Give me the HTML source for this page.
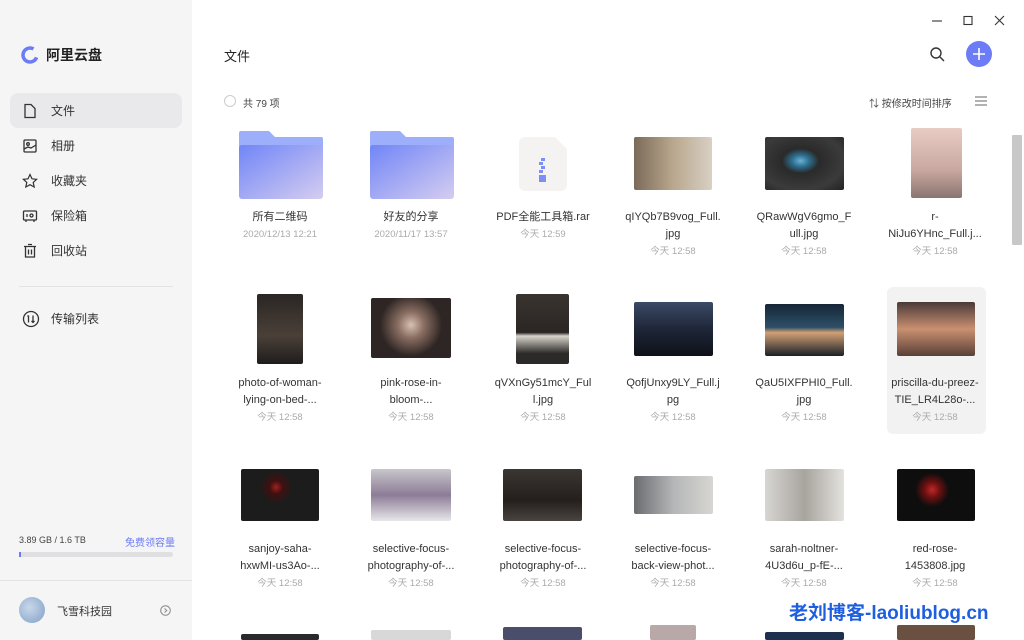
<!DOCTYPE html>
<html><head><meta charset="utf-8"><style>
*{margin:0;padding:0;box-sizing:border-box}
body{width:1024px;height:640px;overflow:hidden;font-family:"Liberation Sans","Noto Sans CJK SC",sans-serif;background:#fff;position:relative;color:#333}
.side{position:absolute;left:0;top:0;width:192px;height:640px;background:#f5f5f6}
.logo{position:absolute;left:20px;top:45px;display:flex;align-items:center;font-size:14px;font-weight:bold;color:#222}
.nav{position:absolute;left:10px;width:172px;height:35px;display:flex;align-items:center;font-size:12px;color:#333}
.nav svg{position:absolute;left:12px}
.nav span{position:absolute;left:41px}
.sel{background:#e9e9ec;border-radius:8px}
.abs{position:absolute}
.item{position:absolute;width:100px;text-align:center;font-size:11px;color:#333;line-height:17px}
.item .t{font-size:9.5px;color:#aaa;line-height:17px}
.th{position:absolute;border-radius:2px}
</style></head><body>
<div class="side">
 <div class="logo"><svg width="20" height="20" viewBox="0 0 20 20"><circle cx="10" cy="10" r="7" fill="none" stroke="#6b7cf6" stroke-width="3.5" stroke-dasharray="34 10" transform="rotate(20 10 10)"/></svg><span style="margin-left:6px">阿里云盘</span></div>
 <div class="nav sel" style="top:93px"><svg width="16" height="16" viewBox="0 0 16 16" fill="none" stroke="#333" stroke-width="1.3"><path d="M3 1.5h6l4 4v9H3z"/></svg><span>文件</span></div>
 <div class="nav" style="top:128px"><svg width="16" height="16" viewBox="0 0 16 16" fill="none" stroke="#333" stroke-width="1.3"><rect x="2" y="2" width="12" height="12" rx="1"/><circle cx="6" cy="6" r="1.3"/><path d="M2 11l4-2 3 1 5-3"/></svg><span>相册</span></div>
 <div class="nav" style="top:163px"><svg width="16" height="16" viewBox="0 0 16 16" fill="none" stroke="#333" stroke-width="1.2"><path d="M8 1.5l2 4.3 4.6.5-3.4 3.1 1 4.6L8 11.7 3.8 14l1-4.6L1.4 6.3l4.6-.5z"/></svg><span>收藏夹</span></div>
 <div class="nav" style="top:198px"><svg width="16" height="16" viewBox="0 0 16 16" fill="none" stroke="#333" stroke-width="1.3"><rect x="1.5" y="3" width="13" height="9" rx="1"/><circle cx="9.5" cy="7.5" r="1.5"/><path d="M5 6v3M4 12v2M12 12v2"/></svg><span>保险箱</span></div>
 <div class="nav" style="top:233px"><svg width="16" height="16" viewBox="0 0 16 16" fill="none" stroke="#333" stroke-width="1.3"><path d="M2 3.5h12M6 1.5h4M3.5 3.5v10.5h9V3.5M6.5 6.5v5M9.5 6.5v5"/></svg><span>回收站</span></div>
 <div class="abs" style="left:19px;top:286px;width:154px;height:1px;background:#e3e3e5"></div>
 <div class="nav" style="top:301px"><svg width="18" height="18" viewBox="0 0 18 18" fill="none" stroke="#333" stroke-width="1.3"><circle cx="9" cy="9" r="7.5"/><path d="M6.5 5.5v7M5.5 6.5l1-1M11 5.5v7M9.5 11l1.5 1.5 1.5-1.5"/></svg><span>传输列表</span></div>
 <div class="abs" style="left:19px;top:535px;font-size:9px;color:#444">3.89 GB / 1.6 TB</div>
 <div class="abs" style="left:125px;top:534px;font-size:10px;color:#6b7cf6">免费领容量</div>
 <div class="abs" style="left:19px;top:552px;width:154px;height:5px;border-radius:3px;background:#e0e0e2"><div style="width:2px;height:5px;background:#6b7cf6"></div></div>
 <div class="abs" style="left:0;top:580px;width:192px;height:1px;background:#e3e3e5"></div>
 <div class="abs" style="left:19px;top:597px;width:26px;height:26px;border-radius:50%;background:radial-gradient(circle at 40% 40%,#c9d8ea,#7f9fc5)"></div>
 <div class="abs" style="left:57px;top:603px;font-size:11px;color:#333">飞雪科技园</div>
 <svg class="abs" style="left:160px;top:605px" width="11" height="11" viewBox="0 0 11 11" fill="none" stroke="#888"><circle cx="5.5" cy="5.5" r="4.8"/><path d="M4.5 3.5l2.3 2-2.3 2"/></svg>
</div>
<svg class="abs" style="left:930px;top:14px" width="80" height="14" viewBox="0 0 80 14" fill="none" stroke="#333" stroke-width="1.1"><path d="M2 7h10"/><rect x="34" y="2.5" width="8" height="8"/><path d="M65 2l9 9M74 2l-9 9"/></svg>
<div class="abs" style="left:224px;top:46px;font-size:13px;color:#222">文件</div>
<svg class="abs" style="left:929px;top:46px" width="17" height="17" viewBox="0 0 17 17" fill="none" stroke="#333" stroke-width="1.4"><circle cx="7" cy="7" r="5"/><path d="M11 11l4 4"/></svg>
<div class="abs" style="left:966px;top:41px;width:26px;height:26px;border-radius:50%;background:#6b7cf6"></div>
<svg class="abs" style="left:966px;top:41px" width="26" height="26"><path d="M13 7v12M7 13h12" stroke="#fff" stroke-width="1.6"/></svg>
<div class="abs" style="left:224px;top:95px;width:12px;height:12px;border-radius:50%;border:1px solid #ccc"></div>
<div class="abs" style="left:243px;top:95px;font-size:10px;color:#444">共 79 项</div>
<div class="abs" style="left:869px;top:95px;font-size:10px;color:#444">⇅ 按修改时间排序</div>
<svg class="abs" style="left:975px;top:96px" width="12" height="10"><path d="M0 1h12M0 5h12M0 9h12" stroke="#666"/></svg>
<div class="abs" style="left:1012px;top:135px;width:10px;height:110px;background:#c8c8c8;border-radius:1px"></div>
<div class="abs" style="left:887px;top:287px;width:99px;height:147px;background:#f2f2f3;border-radius:6px"></div>
<svg class="abs" style="left:239px;top:131px" width="84" height="68" viewBox="0 0 84 68"><defs><linearGradient id="g" x1="0" y1="0" x2="1" y2="1"><stop offset="0" stop-color="#7085f7"/><stop offset="1" stop-color="#d5cdf0"/></linearGradient></defs><path d="M2 0h28l6 6h46a2 2 0 012 2v10H0V2a2 2 0 012-2z" fill="#9daefa"/><rect x="0" y="14" width="84" height="54" rx="3" fill="url(#g)"/></svg>
<svg class="abs" style="left:370px;top:131px" width="84" height="68" viewBox="0 0 84 68"><path d="M2 0h28l6 6h46a2 2 0 012 2v10H0V2a2 2 0 012-2z" fill="#9daefa"/><rect x="0" y="14" width="84" height="54" rx="3" fill="url(#g)"/></svg>
<svg class="abs" style="left:519px;top:137px" width="48" height="54" viewBox="0 0 48 54"><path d="M6 0h30l12 12v36a6 6 0 01-6 6H6a6 6 0 01-6-6V6a6 6 0 016-6z" fill="#f4f3f1"/><g fill="#7d8ff5"><rect x="22" y="21" width="4" height="3"/><rect x="20" y="25" width="4" height="3"/><rect x="22" y="29" width="4" height="3"/><rect x="20" y="33" width="4" height="3"/><rect x="20" y="38" width="7" height="7"/></g></svg>
<div class="th" style="left:634px;top:137px;width:78px;height:53px;background:linear-gradient(90deg,#7a6a58,#b9a78e 50%,#d8d0c4)"></div>
<div class="th" style="left:765px;top:137px;width:79px;height:53px;background:radial-gradient(ellipse at 45% 45%,#6fb0d6 0,#2c6f8f 14%,#2a2a2a 30%,#3b3b3b 70%,#222)"></div>
<div class="th" style="left:911px;top:128px;width:51px;height:70px;background:linear-gradient(180deg,#e8ccc4,#c9a8a0 60%,#8a7470)"></div>
<div class="th" style="left:257px;top:294px;width:46px;height:70px;background:linear-gradient(180deg,#2a2624,#4a4038 60%,#1e1c1b)"></div>
<div class="th" style="left:371px;top:298px;width:80px;height:60px;background:radial-gradient(circle at 50% 45%,#d8c0b4 0,#8a6e62 25%,#2e2624 60%)"></div>
<div class="th" style="left:516px;top:294px;width:53px;height:70px;background:linear-gradient(180deg,#3a3430,#2a2624 55%,#d8d4cc 60%,#2c2a28 85%)"></div>
<div class="th" style="left:634px;top:302px;width:79px;height:54px;background:linear-gradient(180deg,#3b4a66,#1e2638 50%,#0e1118)"></div>
<div class="th" style="left:765px;top:304px;width:79px;height:52px;background:linear-gradient(180deg,#152536,#2e5068 45%,#d2a074 55%,#1a2028)"></div>
<div class="th" style="left:897px;top:302px;width:78px;height:54px;background:linear-gradient(180deg,#4a3a38,#c99070 50%,#5a4038)"></div>
<div class="th" style="left:241px;top:469px;width:78px;height:52px;background:radial-gradient(circle at 45% 35%,#a02020 0,#401010 12%,#1c1c1c 30%)"></div>
<div class="th" style="left:371px;top:469px;width:80px;height:52px;background:linear-gradient(180deg,#c8c6cc,#8d7c96 50%,#e8e6ea)"></div>
<div class="th" style="left:503px;top:469px;width:79px;height:52px;background:linear-gradient(180deg,#3a3632,#241f1c 60%,#4a4440)"></div>
<div class="th" style="left:634px;top:476px;width:79px;height:38px;background:linear-gradient(90deg,#6a6c70,#b4b6b8 50%,#d8d6d2)"></div>
<div class="th" style="left:765px;top:469px;width:79px;height:52px;background:linear-gradient(90deg,#d8d6d2,#a8a49e 50%,#e4e2de)"></div>
<div class="th" style="left:897px;top:469px;width:78px;height:52px;background:radial-gradient(circle at 45% 40%,#c02828 0,#6a1010 15%,#0e0e0e 32%)"></div>
<div class="th" style="left:241px;top:634px;width:78px;height:6px;background:#2a2a2e"></div>
<div class="th" style="left:371px;top:630px;width:80px;height:10px;background:#d8d8d8"></div>
<div class="th" style="left:503px;top:627px;width:79px;height:13px;background:#4a4e6a"></div>
<div class="th" style="left:650px;top:625px;width:46px;height:15px;background:#b8a8a8"></div>
<div class="th" style="left:765px;top:632px;width:79px;height:8px;background:#1e3050"></div>
<div class="th" style="left:897px;top:625px;width:78px;height:15px;background:#6a5040"></div>
<div class="item" style="left:230px;top:209px">所有二维码<div class="t">2020/12/13 12:21</div></div>
<div class="item" style="left:361px;top:209px">好友的分享<div class="t">2020/11/17 13:57</div></div>
<div class="item" style="left:493px;top:209px">PDF全能工具箱.rar<div class="t">今天 12:59</div></div>
<div class="item" style="left:623px;top:209px">qIYQb7B9vog_Full.<br>jpg<div class="t">今天 12:58</div></div>
<div class="item" style="left:754px;top:209px">QRawWgV6gmo_F<br>ull.jpg<div class="t">今天 12:58</div></div>
<div class="item" style="left:885px;top:209px">r-<br>NiJu6YHnc_Full.j...<div class="t">今天 12:58</div></div>
<div class="item" style="left:230px;top:375px">photo-of-woman-<br>lying-on-bed-...<div class="t">今天 12:58</div></div>
<div class="item" style="left:361px;top:375px">pink-rose-in-<br>bloom-...<div class="t">今天 12:58</div></div>
<div class="item" style="left:493px;top:375px">qVXnGy51mcY_Ful<br>l.jpg<div class="t">今天 12:58</div></div>
<div class="item" style="left:623px;top:375px">QofjUnxy9LY_Full.j<br>pg<div class="t">今天 12:58</div></div>
<div class="item" style="left:754px;top:375px">QaU5IXFPHI0_Full.<br>jpg<div class="t">今天 12:58</div></div>
<div class="item" style="left:885px;top:375px">priscilla-du-preez-<br>TIE_LR4L28o-...<div class="t">今天 12:58</div></div>
<div class="item" style="left:230px;top:541px">sanjoy-saha-<br>hxwMI-us3Ao-...<div class="t">今天 12:58</div></div>
<div class="item" style="left:361px;top:541px">selective-focus-<br>photography-of-...<div class="t">今天 12:58</div></div>
<div class="item" style="left:493px;top:541px">selective-focus-<br>photography-of-...<div class="t">今天 12:58</div></div>
<div class="item" style="left:623px;top:541px">selective-focus-<br>back-view-phot...<div class="t">今天 12:58</div></div>
<div class="item" style="left:754px;top:541px">sarah-noltner-<br>4U3d6u_p-fE-...<div class="t">今天 12:58</div></div>
<div class="item" style="left:885px;top:541px">red-rose-<br>1453808.jpg<div class="t">今天 12:58</div></div>
<div class="abs" style="left:789px;top:598px;font-size:19px;font-weight:bold;color:#1e5fe0;text-shadow:0 0 2px #fff,0 0 2px #fff">老刘博客-laoliublog.cn</div>
</body></html>
